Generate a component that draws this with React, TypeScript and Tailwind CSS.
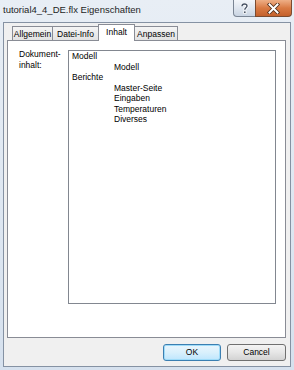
export default function App() {
  return (
    <div className="flex h-[370px] w-[294px] flex-col overflow-hidden bg-gradient-to-b from-[#e8eef5] to-[#d6e1ee] font-['Liberation_Sans',Arial,sans-serif] text-black">
      {/* title bar */}
      <div className="flex h-[22px] shrink-0 items-start">
        <span className="pl-[3px] pt-[4px] text-[9.5px] leading-[12px] text-[#1e1e1e]">
          tutorial4_4_DE.flx Eigenschaften
        </span>
        <div className="ml-auto mr-[2px] flex">
          <div className="flex h-[17px] w-[23px] items-center justify-center rounded-bl-[4px] border border-t-0 border-[#7a8594] bg-gradient-to-b from-[#f3f6fa] via-[#dfe6ef] to-[#c9d4e2]">
            <svg width="9" height="11" viewBox="0 0 9 11">
              <path
                d="M2 3.2C2 1.8 3.1 1 4.5 1S7 1.8 7 3.1c0 1.6-2.2 1.8-2.2 3.6"
                fill="none"
                stroke="#ffffff"
                strokeWidth="3"
              />
              <path
                d="M2 3.2C2 1.8 3.1 1 4.5 1S7 1.8 7 3.1c0 1.6-2.2 1.8-2.2 3.6"
                fill="none"
                stroke="#4a5567"
                strokeWidth="1.4"
              />
              <rect x="3.6" y="8" width="2.4" height="2.4" fill="#4a5567" stroke="#ffffff" strokeWidth="0.8" />
            </svg>
          </div>
          <div className="-ml-px flex h-[17px] w-[37px] items-center justify-center rounded-br-[4px] border border-t-0 border-[#7b4b30] bg-gradient-to-b from-[#eeaf86] via-[#d97a43] to-[#c4612c]">
            <svg width="13" height="11" viewBox="0 0 13 11">
              <path d="M2.5 1.5l8 8M10.5 1.5l-8 8" stroke="#4b2a18" strokeWidth="3.6" strokeLinecap="square" />
              <path d="M2.5 1.5l8 8M10.5 1.5l-8 8" stroke="#ffffff" strokeWidth="2" strokeLinecap="square" />
            </svg>
          </div>
        </div>
      </div>

      {/* client area */}
      <div className="mx-[3px] mb-[3px] flex flex-1 flex-col border border-[#8592a3] bg-[#f0f0f0]">
        {/* tabs */}
        <div className="flex h-[18px] items-end pl-[8px] text-[8.5px] leading-[10px]">
          <div className="mb-px flex h-[14px] w-[41px] items-center justify-center border border-b-0 border-[#898c95] bg-gradient-to-b from-[#f5f5f5] to-[#e2e2e2]">
            Allgemein
          </div>
          <div className="-ml-px mb-px flex h-[14px] w-[47px] items-center justify-center border border-b-0 border-[#898c95] bg-gradient-to-b from-[#f5f5f5] to-[#e2e2e2]">
            Datei-Info
          </div>
          <div className="relative z-10 -ml-px flex h-[17px] w-[37px] items-start justify-center border border-b-0 border-[#898c95] bg-white pt-[2px]">
            Inhalt
          </div>
          <div className="-ml-px mb-px flex h-[14px] w-[44px] items-center justify-center border border-b-0 border-[#898c95] bg-gradient-to-b from-[#f5f5f5] to-[#e2e2e2]">
            Anpassen
          </div>
        </div>

        {/* tab panel */}
        <div className="-mt-px ml-[3px] flex h-[298px] w-[279px] border border-[#898c95] bg-white text-[8.5px]">
          <div className="w-[60px] pl-[11px] pt-[8px] leading-[11px]">
            <div>Dokument-</div>
            <div>inhalt:</div>
          </div>
          <div className="mt-[9px] h-[254px] w-[208px] border border-[#828790] bg-white pl-[3px] leading-[10.5px]">
            <div>Modell</div>
            <div className="pl-[42px]">Modell</div>
            <div>Berichte</div>
            <div className="pl-[42px]">Master-Seite</div>
            <div className="pl-[42px]">Eingaben</div>
            <div className="pl-[42px]">Temperaturen</div>
            <div className="pl-[42px]">Diverses</div>
          </div>
        </div>

        {/* buttons */}
        <div className="mt-[6px] flex justify-end gap-[6px] pr-[4px] text-[8.5px]">
          <button className="flex h-[17px] w-[58px] items-center justify-center rounded-[3px] border border-[#3c7fb1] bg-gradient-to-b from-[#eaf6fd] via-[#d9f0fc] to-[#bee6fd] shadow-[inset_0_0_0_1px_#9fdcf9]">
            OK
          </button>
          <button className="flex h-[17px] w-[59px] items-center justify-center rounded-[3px] border border-[#707070] bg-gradient-to-b from-[#f4f4f4] via-[#e6e6e6] to-[#d3d3d3]">
            Cancel
          </button>
        </div>
      </div>
    </div>
  );
}
